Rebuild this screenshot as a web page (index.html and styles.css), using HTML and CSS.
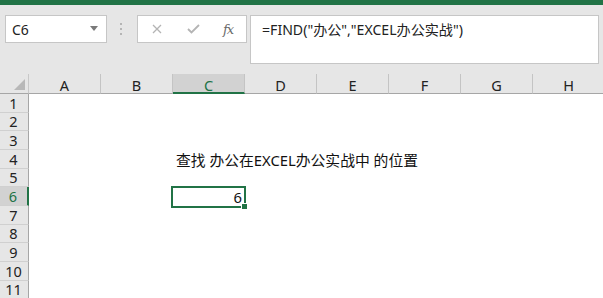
FILE: index.html
```html
<!DOCTYPE html>
<html lang="zh-CN">
<head>
<meta charset="utf-8">
<title>Excel FIND</title>
<link rel="stylesheet" href="styles.css">
</head>
<body>
<div class="app">
  <div class="accent"></div>
  <div class="toolbar">
    <div class="namebox">
      <span class="name">C6</span>
      <svg class="caret" width="8" height="5" viewBox="0 0 8 5"><path d="M0 0H8L4 5Z" fill="#7a7a7a"/></svg>
    </div>
    <div class="grip">
      <svg width="3" height="12" viewBox="0 0 3 12"><rect x="0" y="0" width="2" height="2" fill="#b5b5b5"/><rect x="0" y="5" width="2" height="2" fill="#b5b5b5"/><rect x="0" y="10" width="2" height="2" fill="#b5b5b5"/></svg>
    </div>
    <div class="fnbox">
      <svg class="ico" width="10" height="10" viewBox="0 0 10 10"><path d="M1 1L9 9M9 1L1 9" stroke="#b4b4b4" stroke-width="1.3" fill="none"/></svg>
      <svg class="ico" width="13" height="10" viewBox="0 0 13 10"><path d="M1 5L4.5 8.5L12 1" stroke="#b4b4b4" stroke-width="1.8" fill="none"/></svg>
      <span class="fx">fx</span>
    </div>
    <div class="formula">=FIND("办公","EXCEL办公实战")</div>
  </div>
  <div class="sheet">
    <div class="corner"><span class="tri"></span></div>
    <div class="colhead">A</div>
    <div class="colhead">B</div>
    <div class="colhead sel">C</div>
    <div class="colhead">D</div>
    <div class="colhead">E</div>
    <div class="colhead">F</div>
    <div class="colhead">G</div>
    <div class="colhead">H</div>

    <div class="rowhead r1">1</div>
    <div class="rowhead r2">2</div>
    <div class="rowhead r3">3</div>
    <div class="rowhead r4">4</div>
    <div class="rowhead r5">5</div>
    <div class="rowhead r6 sel">6</div>
    <div class="rowhead r7">7</div>
    <div class="rowhead r8">8</div>
    <div class="rowhead r9">9</div>
    <div class="rowhead r10">10</div>
    <div class="rowhead r11">11</div>

    <div class="cell label">查找 办公在EXCEL办公实战中 的位置</div>
    <div class="cell active">6<span class="handle"></span></div>
  </div>
</div>
</body>
</html>
```

FILE: styles.css
```css
html, body {
  margin: 0;
  padding: 0;
}
body {
  width: 603px;
  height: 298px;
  overflow: hidden;
  background: #ffffff;
  font-family: "Noto Sans", "Noto Sans CJK SC", sans-serif;
  color: #222;
}
.app {
  width: 603px;
  height: 298px;
  background: #e6e6e6;
  display: flex;
  flex-direction: column;
}
.accent {
  height: 5px;
  background: #217346;
  flex: none;
}
.toolbar {
  height: 69px;
  flex: none;
  box-sizing: border-box;
  padding: 10px 0 0 5px;
  display: flex;
  align-items: flex-start;
}
.namebox {
  width: 102px;
  height: 28px;
  box-sizing: border-box;
  background: #fff;
  border: 1px solid #c6c6c6;
  display: flex;
  align-items: center;
  justify-content: space-between;
  padding: 0 8px 0 6px;
}
.name {
  font-size: 14px;
  color: #222;
}
.caret {
  margin-top: -2px;
}
.grip {
  width: 30px;
  height: 28px;
  display: flex;
  align-items: center;
  justify-content: center;
}
.grip svg {
  margin-right: 1px;
}
.fnbox {
  width: 110px;
  height: 28px;
  box-sizing: border-box;
  background: #fff;
  border: 1px solid #c6c6c6;
  display: flex;
  align-items: center;
  padding: 0 0 0 14px;
  gap: 25px;
}
.fx {
  font-family: "DejaVu Serif", "Liberation Serif", serif;
  font-style: italic;
  font-size: 13px;
  color: #6a6a6a;
  letter-spacing: -1px;
  margin-left: -2px;
}
.formula {
  margin-left: 3px;
  width: 349px;
  height: 49px;
  box-sizing: border-box;
  background: #fff;
  border: 1px solid #c6c6c6;
  padding: 4px 0 0 11px;
  font-size: 14.1px;
  line-height: 20px;
  color: #222;
  white-space: nowrap;
}
.sheet {
  flex: 1;
  display: grid;
  grid-template-columns: 29px repeat(8, 72px);
  grid-template-rows: 20px repeat(11, 18.67px);
  background: #fff;
  overflow: hidden;
}
.corner {
  grid-column: 1;
  grid-row: 1;
  background: #e6e6e6;
  border-bottom: 1px solid #a6a6a6;
  border-right: 1px solid #c8c8c8;
  position: relative;
}
.tri {
  position: absolute;
  right: 3px;
  bottom: 3px;
  width: 11px;
  height: 11px;
  background: #b8b8b8;
  clip-path: polygon(100% 0, 100% 100%, 0 100%);
}
.colhead {
  grid-row: 1;
  background: #e6e6e6;
  border-bottom: 1px solid #a6a6a6;
  border-right: 1px solid #c4c4c4;
  font-size: 14.5px;
  line-height: 20px;
  text-align: center;
  color: #222;
  box-sizing: border-box;
  padding-top: 1px;
}
.colhead.sel {
  background: #d2d2d2;
  color: #217346;
  border-bottom: 2px solid #217346;
}
.rowhead {
  grid-column: 1;
  background: #e6e6e6;
  border-right: 1px solid #a6a6a6;
  border-bottom: 1px solid #d0d0d0;
  font-size: 14.5px;
  text-align: center;
  color: #222;
  display: flex;
  align-items: center;
  justify-content: center;
  box-sizing: border-box;
  padding-right: 1px;
}
.rowhead.sel {
  background: #d2d2d2;
  color: #217346;
  border-right: 2px solid #217346;
}
.r1 { grid-row: 2; }
.r2 { grid-row: 3; }
.r3 { grid-row: 4; }
.r4 { grid-row: 5; }
.r5 { grid-row: 6; }
.r6 { grid-row: 7; }
.r7 { grid-row: 8; }
.r8 { grid-row: 9; }
.r9 { grid-row: 10; }
.r10 { grid-row: 11; }
.r11 { grid-row: 12; }
.cell {
  font-size: 14.8px;
  color: #111;
  display: flex;
  align-items: center;
  white-space: nowrap;
}
.label {
  grid-column: 4 / span 5;
  grid-row: 5;
  padding-left: 3px;
}
.active {
  grid-column: 4;
  grid-row: 7;
  position: relative;
  justify-content: flex-end;
  padding-right: 3px;
}
.active::before {
  content: "";
  position: absolute;
  left: -2px;
  top: -1px;
  right: -1px;
  bottom: -2px;
  border: 2px solid #217346;
}
.handle {
  position: absolute;
  right: -3px;
  bottom: -4px;
  width: 5px;
  height: 5px;
  background: #217346;
  border: 1px solid #fff;
}
```
